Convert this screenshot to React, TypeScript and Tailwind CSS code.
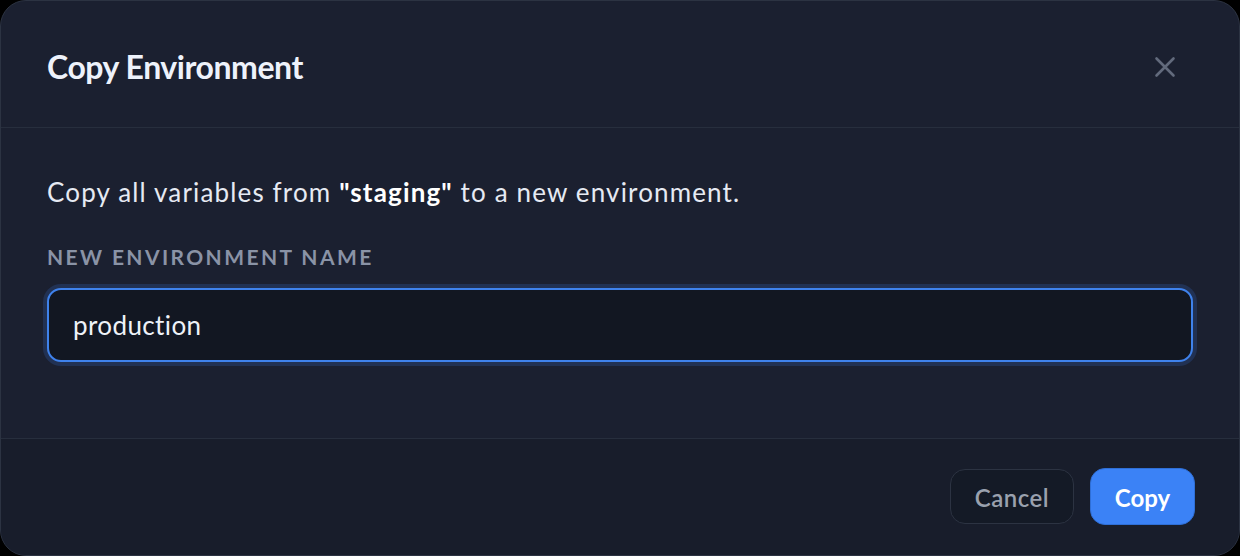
import React from "react";

export default function App() {
  return (
    <div className="w-[1240px] h-[556px] bg-black" style={{ fontFamily: "Lato, 'Noto Sans', sans-serif" }}>
      <div className="w-full h-full rounded-[26px] border border-[#2c3342] bg-[#1b2030] overflow-hidden flex flex-col">
        <div className="h-[127px] flex items-center justify-between pl-[46px] pr-[62px] pt-[6px] border-b border-[#272e3d] shrink-0">
          <h1 className="text-[32px] font-bold text-[#eef2fb] tracking-[-0.45px] leading-[40px]">Copy Environment</h1>
          <svg width="24" height="24" viewBox="0 0 24 24" fill="none" stroke="#626a7c" strokeWidth="2.6" strokeLinecap="round">
            <path d="M3.5 3.5 L20.5 20.5 M20.5 3.5 L3.5 20.5" />
          </svg>
        </div>
        <div className="flex-1 px-[46px] pt-[48px] border-b border-[#272e3d]">
          <p className="text-[26px] text-[#e6eaf3] leading-[32px] tracking-[1.15px]">
            Copy all variables from <span className="font-bold text-white">"staging"</span> to a new environment.
          </p>
          <div className="mt-[37px] text-[21px] font-bold text-[#8a93a6] tracking-[2.4px] uppercase leading-[24px]">
            New Environment Name
          </div>
          <div className="mt-[19px] h-[74px] rounded-[14px] border-2 border-[#3f82ec] bg-[#121722] shadow-[0_0_0_4px_rgba(59,130,246,0.18)] flex items-center px-[24px]">
            <span className="text-[26px] text-[#eef2f8] tracking-[0.4px]">production</span>
          </div>
        </div>
        <div className="h-[116px] shrink-0 bg-[#181d2b] flex items-center justify-end gap-[16px] pr-[44px] pb-[2px]">
          <button className="h-[55px] w-[124px] pt-[4px] rounded-[15px] border border-[#2c3342] bg-[#141a26] text-[24px] text-[#9aa1ae] font-semibold tracking-[0.5px]">
            Cancel
          </button>
          <button className="h-[57px] w-[105px] pt-[4px] rounded-[15px] border border-[#2f6fd6] bg-[#3b82f6] text-[24px] text-white font-bold">
            Copy
          </button>
        </div>
      </div>
    </div>
  );
}
